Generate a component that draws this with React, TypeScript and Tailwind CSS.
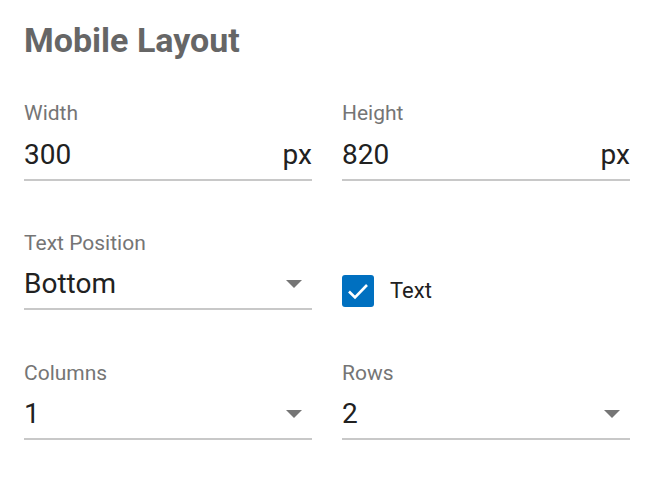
const font = { fontFamily: "Roboto, 'Liberation Sans', sans-serif" };

function Label({ children }: { children: React.ReactNode }) {
  return <div className="text-[21px] leading-[24px] text-[#757575]">{children}</div>;
}

function Caret() {
  return (
    <svg width="16" height="8" viewBox="0 0 16 8" className="shrink-0">
      <path d="M0 0h16L8 8z" fill="#757575" />
    </svg>
  );
}

function NumberField({ label, value }: { label: string; value: string }) {
  return (
    <div>
      <Label>{label}</Label>
      <div className="mt-[14px] flex items-center justify-between border-b-2 border-[#c8c8c8] pb-[8px] text-[28px] leading-[32px] text-[#212121]">
        <span>{value}</span>
        <span>px</span>
      </div>
    </div>
  );
}

function SelectField({ label, value }: { label: string; value: string }) {
  return (
    <div>
      <Label>{label}</Label>
      <div className="mt-[13px] flex items-center justify-between border-b-2 border-[#c8c8c8] pb-[8px] pr-[10px] text-[28px] leading-[32px] text-[#212121]">
        <span>{value}</span>
        <Caret />
      </div>
    </div>
  );
}

export default function App() {
  return (
    <div className="min-h-screen w-[656px] bg-white px-6 pt-[20px]" style={font}>
      <h1 className="text-[34px] font-bold leading-[40px] text-[#666666]">Mobile Layout</h1>

      <div className="mt-[41px] grid grid-cols-[288px_288px] gap-x-[30px]">
        <NumberField label="Width" value="300" />
        <NumberField label="Height" value="820" />

        <div className="mt-[50px]">
          <SelectField label="Text Position" value="Bottom" />
        </div>
        <div className="mt-[50px] pt-[44px]">
          <label className="flex items-center gap-4">
            <span className="flex h-8 w-8 items-center justify-center rounded-[3px] bg-[#0070c0]">
              <svg width="24" height="24" viewBox="0 0 24 24" fill="none">
                <path d="M3 12.5l6 6L21 6" stroke="white" strokeWidth="2.6" />
              </svg>
            </span>
            <span className="text-[22px] leading-[24px] text-[#212121]">Text</span>
          </label>
        </div>

        <div className="mt-[51px]">
          <SelectField label="Columns" value="1" />
        </div>
        <div className="mt-[51px]">
          <SelectField label="Rows" value="2" />
        </div>
      </div>
    </div>
  );
}
